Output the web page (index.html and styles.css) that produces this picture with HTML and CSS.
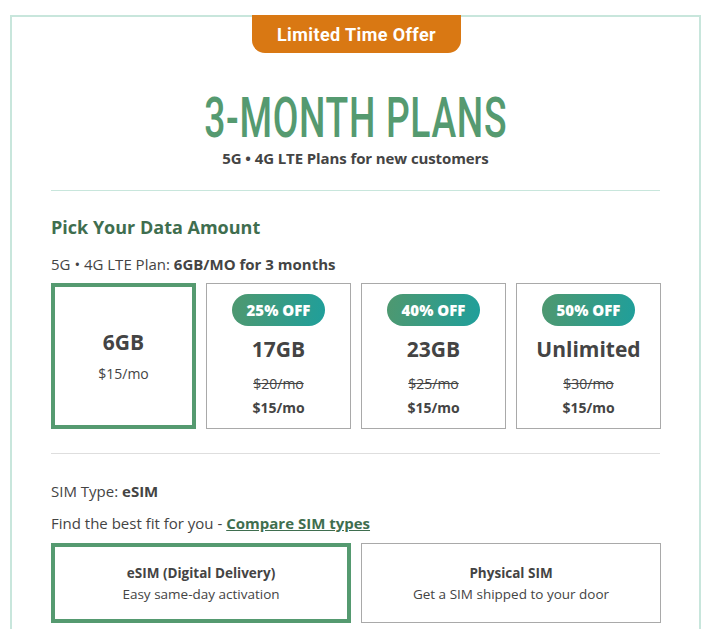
FILE: index.html
```html
<!DOCTYPE html>
<html>
<head>
<meta charset="utf-8">
<link rel="stylesheet" href="styles.css">
</head>
<body>
<div class="card">
  <div class="tab-row"><div class="tab">Limited Time Offer</div></div>
  <div class="hero">
    <h1 class="title"><span>3-MONTH PLANS</span></h1>
    <p class="subtitle">5G • 4G LTE Plans for new customers</p>
  </div>
  <hr class="divider green">
  <h2 class="heading">Pick Your Data Amount</h2>
  <p class="plan-line">5G • 4G LTE Plan: <b>6GB/MO for 3 months</b></p>
  <div class="plans">
    <div class="plan selected">
      <div class="gb">6GB</div>
      <div class="price-reg">$15/mo</div>
    </div>
    <div class="plan">
      <div class="badge">25% OFF</div>
      <div class="gb">17GB</div>
      <div class="old">$20/mo</div>
      <div class="new">$15/mo</div>
    </div>
    <div class="plan">
      <div class="badge">40% OFF</div>
      <div class="gb">23GB</div>
      <div class="old">$25/mo</div>
      <div class="new">$15/mo</div>
    </div>
    <div class="plan">
      <div class="badge">50% OFF</div>
      <div class="gb">Unlimited</div>
      <div class="old">$30/mo</div>
      <div class="new">$15/mo</div>
    </div>
  </div>
  <hr class="divider gray">
  <p class="sim-type">SIM Type: <b>eSIM</b></p>
  <p class="fit">Find the best fit for you - <a href="#" class="link">Compare SIM types</a></p>
  <div class="sims">
    <div class="sim selected">
      <div class="sim-name">eSIM (Digital Delivery)</div>
      <div class="sim-desc">Easy same-day activation</div>
    </div>
    <div class="sim">
      <div class="sim-name">Physical SIM</div>
      <div class="sim-desc">Get a SIM shipped to your door</div>
    </div>
  </div>
</div>
</body>
</html>
```
FILE: styles.css
```css
* { box-sizing: border-box; }
html, body { margin: 0; padding: 0; background: #fff; }
body {
  padding: 15px 8px 0 10px;
  font-family: "Open Sans", Lato, sans-serif;
  color: #444;
  overflow: hidden;
  height: 629px;
}
.card {
  border: 2px solid #c8e6dc;
  border-bottom: none;
  padding: 0 39px 40px 39px;
  height: 640px;
}
.tab-row { display: flex; justify-content: center; margin-top: -2px; }
.tab {
  width: 209px;
  height: 38px;
  background: #d97813;
  color: #fff;
  font-family: Roboto, sans-serif;
  font-weight: 700;
  font-size: 18px;
  letter-spacing: 0.4px;
  display: flex;
  align-items: center;
  justify-content: center;
  border-radius: 0 0 13px 13px;
  margin-left: 2px;
}
.hero { text-align: center; }
.title {
  margin: 41px 0 0;
  font-family: Roboto, sans-serif;
  font-weight: 500;
  font-size: 56px;
  line-height: 48px;
  height: 48px;
  color: #559a70;
}
.title span { display: inline-block; transform: scaleX(0.665); letter-spacing: 1px; }
.subtitle {
  margin: 7px 0 0;
  font-weight: 700;
  font-size: 15px;
  line-height: 18px;
  letter-spacing: -0.1px;
}
.divider { border: none; height: 1px; margin: 23px 0 0; }
.divider.green { background: #c8e6dc; }
.divider.gray { background: #dedede; margin-top: 24px; }
.heading {
  margin: 24px 0 0;
  font-size: 18px;
  line-height: 24px;
  font-weight: 700;
  color: #3f6e4f;
}
.plan-line { margin: 15px 0 0; font-size: 15px; line-height: 20px; }
.plans {
  margin-top: 9px;
  display: grid;
  grid-template-columns: repeat(4, 145px);
  gap: 10px;
}
.plan {
  height: 146px;
  border: 1px solid #a9a9a9;
  display: flex;
  flex-direction: column;
  align-items: center;
  padding-top: 10px;
}
.plan.selected { border: 4px solid #559a70; justify-content: center; padding-top: 0; }
.badge {
  width: 93px;
  height: 32px;
  border-radius: 16px;
  background: linear-gradient(100deg, #4f986f 0%, #1f9f9b 100%);
  color: #fff;
  font-weight: 800;
  font-size: 15px;
  display: flex;
  align-items: center;
  justify-content: center;
}
.gb { font-size: 21px; font-weight: 700; line-height: 28px; margin-top: 9px; }
.plan.selected .gb { margin-top: 0; }
.price-reg { font-size: 14px; margin-top: 8px; line-height: 20px; }
.old { text-decoration: line-through; font-size: 14px; line-height: 20px; margin-top: 11px; }
.new { font-weight: 700; font-size: 14px; line-height: 20px; margin-top: 4px; }
.sim-type { margin: 27px 0 0; font-size: 15px; line-height: 20px; }
.fit { margin: 12px 0 0; font-size: 15px; line-height: 20px; }
.link { color: #3f6e4f; font-weight: 700; }
.sims {
  margin-top: 10px;
  display: grid;
  grid-template-columns: 300px 300px;
  gap: 10px;
}
.sim {
  height: 80px;
  border: 1px solid #a9a9a9;
  display: flex;
  flex-direction: column;
  align-items: center;
  justify-content: center;
  gap: 3px;
  font-size: 13.5px;
}
.sim.selected { border: 4px solid #559a70; }
.sim-name { font-weight: 700; line-height: 18px; }
.sim-desc { line-height: 18px; }
```
